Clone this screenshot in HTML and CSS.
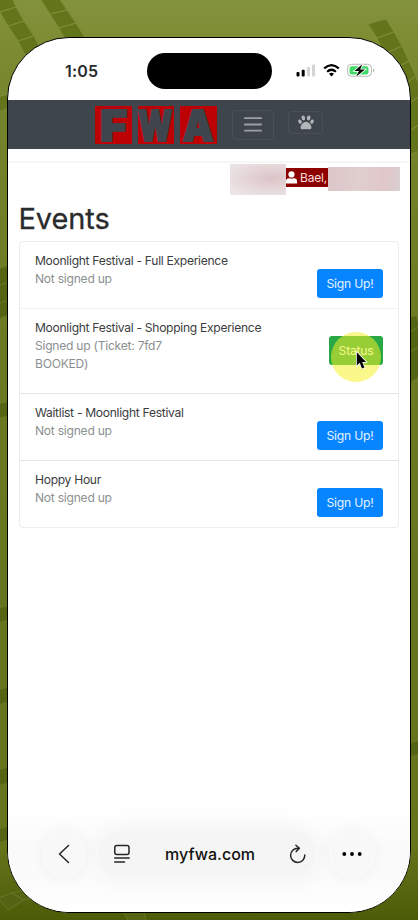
FILE: index.html
```html
<!DOCTYPE html>
<html lang="en">
<head>
<meta charset="utf-8">
<meta name="viewport" content="width=device-width">
<title>Events</title>
<link rel="stylesheet" href="styles.css">
</head>
<body>
<svg class="wallpaper" viewBox="0 0 418 920" aria-hidden="true">
  <g fill="#62751b" stroke="#7d8c37" stroke-width="1">
    <path d="M-8-10L9-10L16 7L0 12ZM0 12L16 7L24 21L8 26ZM8 26L24 21L34 36L18 41ZM18 41L34 36L41 50L25 55Z"/>
    <path d="M38-5L57-5L67 10L50 14ZM50 14L67 10L76 23L59 28ZM59 28L76 23L85 38L67 43Z"/>
    <path d="M368 24L386 19L394 32L377 38ZM377 38L394 32L402 46L384 54ZM384 54L402 46L409 61L392 70ZM392 70L409 61L416 76L400 88ZM400 88L416 76L422 94L406 106ZM406 106L422 94V122L406 134ZM406 134L422 122V150L406 156Z"/>
    <path d="M-2 97L8 94V108L-2 113Z"/>
  </g>
  <g fill="#536514" stroke="#667623" stroke-width="1">
    <path d="M-2 269L8 266V282L-2 286ZM-2 286L8 282V300L-2 304ZM-2 304L8 300V315L-2 319ZM-2 404L8 402V416L-2 418ZM-2 608L8 606V620L-2 623ZM-2 690L8 687V702L-2 705ZM-2 770L8 767V783L-2 786ZM-2 829L8 826V840L-2 843Z"/>
    <path d="M410 317L416 316L420 326L410 332ZM410 332L420 326V346L410 352ZM410 352L420 346V376L410 383ZM410 743L420 740V754L410 757Z"/>
    <path d="M-2 898L12 893L24 900L8 910ZM12 893L26 889L36 897L24 900ZM124 912H144L147 925H130Z"/>
  </g>
</svg>
<div class="phone">
  <div class="status-bar">
    <span class="clock">1:05</span>
    <div class="island"></div>
    <svg class="indicators" width="80" height="16" viewBox="0 0 80 16">
      <g><rect x="0.5" y="9" width="3" height="4.5" rx="1"/><rect x="5.7" y="6.8" width="3" height="6.7" rx="1"/><g fill="#d4d4d4"><rect x="11" y="4" width="3" height="9.5" rx="1"/><rect x="16" y="1.5" width="3" height="12" rx="1"/></g></g>
      <g fill="none" stroke="#000" stroke-width="2.2"><path d="M28.2 5.4Q35.5-1.2 42.8 5.4"/><path d="M31.1 8.7Q35.5 4.8 39.9 8.7"/></g>
      <path d="M33 10.8Q35.5 8.8 38 10.8L35.5 13.5Z"/>
      <rect x="51.5" y="1.3" width="24" height="12" rx="4" fill="#fff" stroke="#b5b8b0"/>
      <rect x="53.5" y="3.2" width="19" height="8.3" rx="2.3" fill="#42d969"/>
      <path d="M77 5.5Q80 7.3 77 9.2Z" fill="#b5b8b0"/>
      <path d="M66.2 1.3L58.5 8H63L60 13.7L69 6.5H64.2Z" stroke="#fff" stroke-width="1.6" paint-order="stroke"/>
    </svg>
  </div>
  <header class="navbar">
    <div class="brand"><span class="tile"><b class="glyph f">F</b></span><span class="tile"><b class="glyph w">W</b></span><span class="tile"><b class="glyph a">A</b></span></div>
    <button class="nav-button menu" aria-label="Menu"><svg width="18" height="16" viewBox="0 0 18 16"><path d="M.8 1.2H17.2M.8 7.5H17.2M.8 13.7H17.2" stroke="#9b9ea2" stroke-width="1.8" stroke-linecap="round"/></svg></button>
    <button class="nav-button paw" aria-label="Pets"><svg width="16" height="15" viewBox="0 0 16 15" fill="#b2b5ba"><ellipse cx="5.3" cy="2.9" rx="1.75" ry="2.5" transform="rotate(-12 5.3 2.9)"/><ellipse cx="10.7" cy="2.9" rx="1.75" ry="2.5" transform="rotate(12 10.7 2.9)"/><ellipse cx="2" cy="6.6" rx="1.6" ry="2.2" transform="rotate(-23 2 6.6)"/><ellipse cx="14" cy="6.6" rx="1.6" ry="2.2" transform="rotate(23 14 6.6)"/><path d="M8 6.7C5.3 6.7 2.6 10 2.6 12.2C2.6 15.5 6 14 8 14S13.4 15.5 13.4 12.2C13.4 10 10.7 6.7 8 6.7Z"/></svg></button>
  </header>
  <div class="divider"></div>
  <div class="account">
    <span class="redacted left"></span>
    <span class="user"><svg width="11" height="13" viewBox="0 0 11 13" fill="#fff"><circle cx="5.5" cy="3.4" r="3.1"/><path d="M0 12.5V10.4Q0 7.3 3 7.3Q5.5 8.2 8 7.3Q11 7.3 11 10.4V12.5Z"/></svg><span>Bael,</span></span>
    <span class="redacted right"></span>
  </div>
  <main>
    <h1>Events</h1>
    <ul class="events">
      <li><div class="info"><div class="name">Moonlight Festival - Full Experience</div><div class="state">Not signed up</div></div><button class="action">Sign Up!</button></li>
      <li class="tall"><div class="info"><div class="name">Moonlight Festival - Shopping Experience</div><div class="state">Signed up (Ticket: 7fd7<br>BOOKED)</div></div>
        <button class="action booked">Status</button>
        <div class="pointer"><svg width="13" height="20" viewBox="0 0 13 20"><path d="M1.8 1.2V14.5L4.7 11.8L7 17.5L9.4 16.5L7.2 11H11Z" stroke="#fff" stroke-width="1.6" paint-order="stroke"/></svg></div></li>
      <li><div class="info"><div class="name">Waitlist - Moonlight Festival</div><div class="state">Not signed up</div></div><button class="action">Sign Up!</button></li>
      <li><div class="info"><div class="name">Hoppy Hour</div><div class="state">Not signed up</div></div><button class="action">Sign Up!</button></li>
    </ul>
  </main>
  <nav class="browser-bar">
    <button class="round" aria-label="Back"><svg width="12" height="20" viewBox="0 0 12 20"><path d="M10.5 1.5L1.5 10L10.5 18.5" fill="none" stroke="#262626" stroke-width="1.5" stroke-linecap="round" stroke-linejoin="round"/></svg></button>
    <div class="address">
      <svg width="18" height="20" viewBox="0 0 18 20" fill="none" stroke="#262626" stroke-width="1.5" stroke-linecap="round"><rect x="1.8" y="1.6" width="14.2" height="8.9" rx="2"/><path d="M1.7 14H16.2M1.7 18.1H11.5"/></svg>
      <span class="url">myfwa.com</span>
      <svg width="18" height="20" viewBox="0 0 18 20" fill="none" stroke="#262626" stroke-width="1.5" stroke-linecap="round" stroke-linejoin="round"><path d="M8.9 4.2A7.1 7.1 0 1 0 15.8 11M6.9 1.2L10.4 4.3L7.2 7.6"/></svg>
    </div>
    <button class="round more" aria-label="More"><svg width="20" height="4" viewBox="0 0 20 4"><circle cx="2.3" cy="2" r="1.9"/><circle cx="10" cy="2" r="1.9"/><circle cx="17.7" cy="2" r="1.9"/></svg></button>
  </nav>
</div>
</body>
</html>
```
FILE: styles.css
```css
* { box-sizing: border-box; }
body {
  margin: 0;
  height: 920px;
  overflow: hidden;
  padding: 37px 7px 0;
  background: linear-gradient(#83933c, #7f8e35 3.5%, #74842b 12%, #6c7b22 35%, #65751f 65%, #66751b 92%, #4b5b07);
  font-family: Inter, "Liberation Sans", sans-serif;
  color: #292b2d;
  position: relative;
}
button { font: inherit; padding: 0; margin: 0; }
svg { display: block; }
.wallpaper { position: absolute; inset: 0; width: 418px; height: 920px; }
.phone {
  position: relative;
  width: 404px;
  height: 876px;
  border: 1.5px solid #000;
  border-radius: 62px;
  background: #fff;
  overflow: hidden;
  display: flex;
  flex-direction: column;
}
.status-bar { height: 62px; flex: none; display: flex; align-items: center; padding: 3px 34px 0 57px; }
.clock { font-size: 16px; font-weight: 600; width: 82px; letter-spacing: .2px; }
.island { width: 125px; height: 36px; border-radius: 18px; background: #000; }
.indicators { margin-left: 24px; flex: none; }
.navbar { flex: none; height: 49px; background: #3f454c; display: flex; align-items: center; padding-left: 87px; }
.brand { display: flex; gap: 6px; }
.tile { width: 36.5px; height: 38px; background: #bd0205; display: flex; justify-content: center; align-items: center; }
.glyph { color: #3f454c; font-size: 43px; font-weight: 900; line-height: 38px; -webkit-text-stroke: 2px #3f454c; }
.w { transform: scaleX(.74); }
.a { transform: scaleX(.9); }
.f { transform: scaleX(1.08); }
.nav-button { background: none; border: 1px solid #4a5056; border-radius: 4px; display: grid; place-items: center; }
.menu { width: 42px; height: 30px; margin-left: 15.5px; }
.paw { width: 35px; height: 23px; margin: -4px 0 0 14px; }
.divider { flex: none; height: 14px; border-bottom: 2px solid #f5f6f6; }
.account { height: 31px; flex: none; display: flex; align-items: flex-start; margin: 1px 0 0 222px; }
.redacted.left { width: 56px; height: 31px; background: radial-gradient(ellipse at 75% 45%, #dcc4c7, #e5d5d7 45%, #eeebeb 100%); }
.user { width: 42px; height: 19px; margin-top: 4px; background: #8d0000; color: #f5dede; display: flex; align-items: center; gap: 3px; font-size: 12px; letter-spacing: -.2px; }
.redacted.right { width: 72px; height: 24px; margin-top: 3px; background: linear-gradient(100deg, #dbc6c8, #e1cecf 45%, #e0c7c9 80%, #d8d0d1); }
main { padding: 5px 11px 0 10.5px; }
h1 { margin: 0; font-size: 29px; line-height: 37px; font-weight: 400; height: 41px; letter-spacing: -.1px; -webkit-text-stroke: .3px #292b2d; }
.events { list-style: none; margin: 0; padding: 0; border: 1px solid #ececec; border-radius: 4px; }
.events li { height: 67px; display: flex; justify-content: space-between; padding: 10px 15px 0; position: relative; }
.events li:first-child { height: 66px; }
.events li + li { border-top: 1px solid #e4e5e5; }
.events li.tall { height: 85px; border-top-color: #f0f1f1; }
.info { font-size: 12.1px; line-height: 18px; white-space: nowrap; letter-spacing: -.3px; padding-left: .5px; }
.name { color: #3b3d3f; }
.state { color: #8c8f91; letter-spacing: -.25px; }
.action { width: 66px; height: 29px; margin-top: 17px; flex: none; border: 0; border-radius: 3px; background: #0784ff; color: #e5f3ff; font-size: 12.2px; letter-spacing: -.25px; }
.booked { width: 54px; background: #28a745; color: #fff; }
.pointer { position: absolute; left: 311px; top: 23px; width: 50px; height: 50px; border-radius: 50%; background: rgba(246, 240, 40, .54); }
.pointer svg { margin: 19px 0 0 24px; }
.browser-bar { margin-top: auto; height: 110px; flex: none; display: flex; align-items: center; padding: 0 35px 6px; gap: 12px; background: linear-gradient(#fff, #fafafa 45%, #fbfbfb 70%, #fff); }
.round { width: 42px; height: 46px; border: 0; border-radius: 23px; background: #f8f8f8; display: grid; place-items: center; box-shadow: 0 0 14px #f0f0f0, inset 0 0 1px 1px #fcfcfc; }
.address { flex: 1; height: 50px; border-radius: 25px; background: #f5f5f5; display: flex; align-items: center; justify-content: space-between; padding: 0 10px 0 16px; box-shadow: 0 0 20px #f2f2f2, inset 0 0 1px 1px #fafafa; }
.url { font-size: 16px; font-weight: 500; color: #111; }
.more { width: 46px; }
```
